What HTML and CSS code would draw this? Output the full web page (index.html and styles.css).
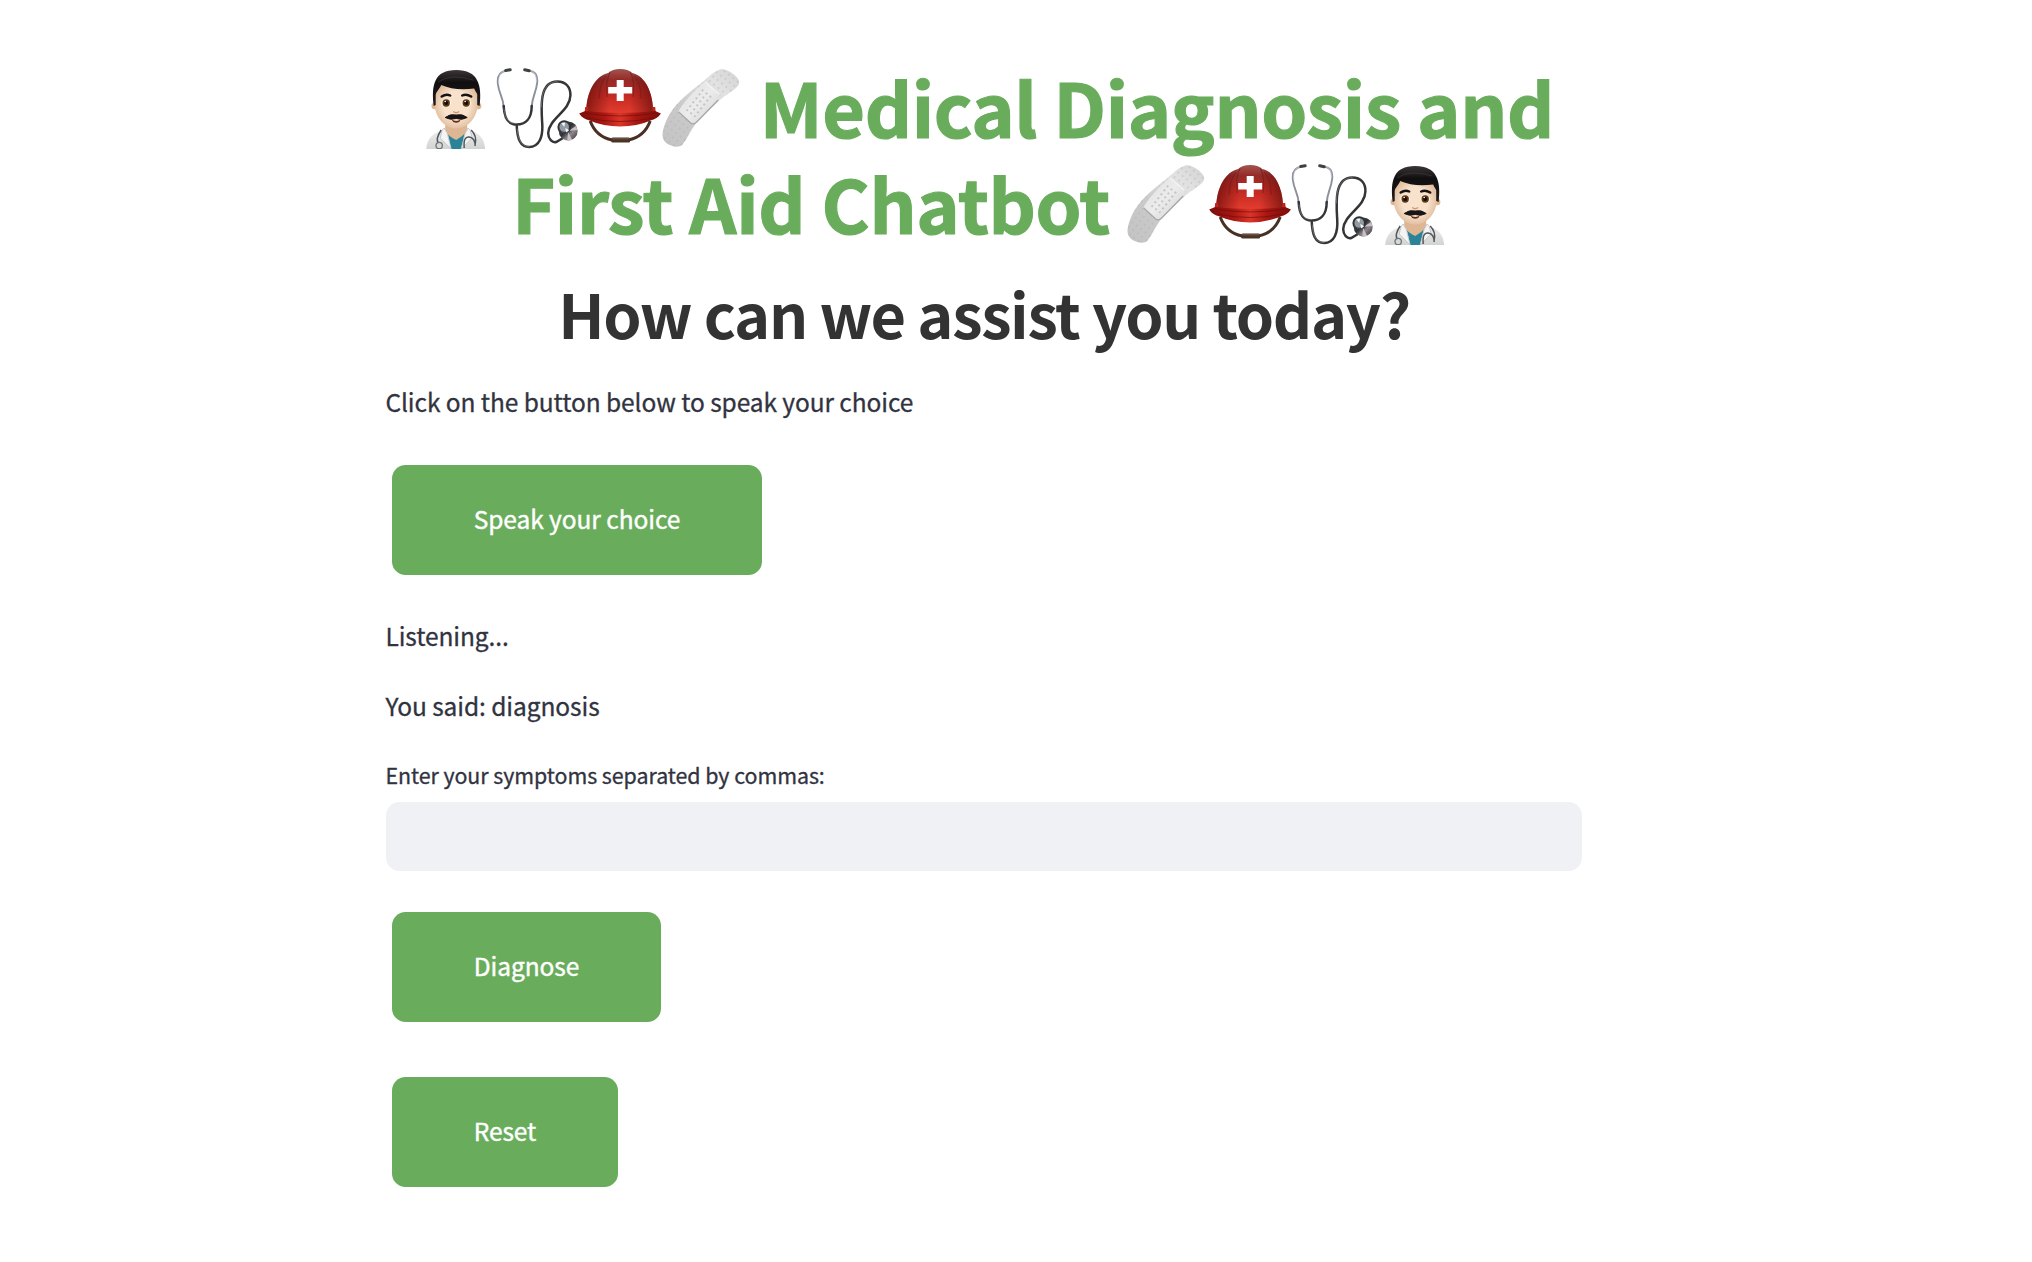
FILE: index.html
```html
<!DOCTYPE html>
<html lang="en">
<head>
<meta charset="utf-8">
<title>Medical Diagnosis and First Aid Chatbot</title>
<link rel="stylesheet" href="styles.css">
</head>
<body>
<svg class="defs" width="0" height="0" aria-hidden="true">
  <defs>
    <radialGradient id="skin" cx=".5" cy=".5" r=".6"><stop offset=".5" stop-color="#f8e2cb"/><stop offset="1" stop-color="#d9b08e"/></radialGradient>
    <linearGradient id="hair" x1="0" y1="0" x2="0" y2="1"><stop offset="0" stop-color="#3b3637"/><stop offset=".35" stop-color="#100e0f"/><stop offset="1" stop-color="#211c1d"/></linearGradient>
    <linearGradient id="coat" x1="0" y1="0" x2="0" y2="1"><stop offset="0" stop-color="#f0f0f0"/><stop offset="1" stop-color="#d2d4d4"/></linearGradient>
    <linearGradient id="dome" x1="0" y1="0" x2="0" y2="1"><stop offset="0" stop-color="#a35450"/><stop offset=".25" stop-color="#952a26"/><stop offset=".6" stop-color="#c22a22"/><stop offset="1" stop-color="#e43b2f"/></linearGradient>
    <linearGradient id="dome-side" x1="0" y1="0" x2="1" y2="0"><stop offset="0" stop-color="#5c0b08" stop-opacity=".65"/><stop offset=".35" stop-color="#5c0b08" stop-opacity="0"/><stop offset=".65" stop-color="#5c0b08" stop-opacity="0"/><stop offset="1" stop-color="#5c0b08" stop-opacity=".65"/></linearGradient>
    <linearGradient id="brim" x1="0" y1="0" x2="1" y2="0"><stop offset="0" stop-color="#7b0d0a"/><stop offset=".3" stop-color="#a91712"/><stop offset=".5" stop-color="#dc3529"/><stop offset=".7" stop-color="#a91712"/><stop offset="1" stop-color="#7b0d0a"/></linearGradient>
    <linearGradient id="strip" x1="1" y1="0" x2="0" y2="1"><stop offset="0" stop-color="#d2d2d2"/><stop offset=".25" stop-color="#e2e2e2"/><stop offset=".6" stop-color="#cacaca"/><stop offset="1" stop-color="#c3c3c3"/></linearGradient>
    <linearGradient id="pad" x1="0" y1="0" x2="1" y2="1"><stop offset="0" stop-color="#dedede"/><stop offset=".5" stop-color="#ececec"/><stop offset="1" stop-color="#cfcfcf"/></linearGradient>
    <linearGradient id="metal" x1="0" y1="0" x2="1" y2="1"><stop offset="0" stop-color="#55575a"/><stop offset=".45" stop-color="#303134"/><stop offset=".65" stop-color="#8d878d"/><stop offset="1" stop-color="#2c2c2e"/></linearGradient>
    <pattern id="holes" width="5.6" height="5.6" patternUnits="userSpaceOnUse" patternTransform="rotate(-52)"><circle cx="2" cy="2" r=".65" fill="#aaa"/></pattern>
    <pattern id="holes-dark" width="5" height="5" patternUnits="userSpaceOnUse" patternTransform="rotate(-52)"><circle cx="2" cy="2" r=".7" fill="#858585"/></pattern>
  </defs>
  <symbol id="doctor" viewBox="0 0 82 82">
    <path d="M12 82C13 71 18 67 29 63l5-3h16l5 3c11 4 15 8 16 19Z" fill="url(#coat)"/>
    <path d="M33 64 37 82H47L51 64Z" fill="#2a8498"/>
    <path d="M31 56h22v8q-5 6-11 9-7-3-11-9Z" fill="#dfb694"/>
    <path d="M30 61 33 66 37 82 26 71 28 63ZM54 61l-3 5-4 16 11-11-2-8Z" fill="#f4f4f4" stroke="#bbbfbf" stroke-width=".8"/>
    <path d="M27 63C23 69 22 73 24 76M57 63c5 5 5 10 4 14M50 81q-1-12 5-11 6 1 6 9" fill="none" stroke="#53575a" stroke-width="1.5"/>
    <circle cx="25" cy="78.5" r="3.2" fill="#d5d8d9" stroke="#6e7477" stroke-width="1.3"/>
    <circle cx="20.5" cy="39" r="3.2" fill="#dfb48f"/><circle cx="64" cy="39" r="3.2" fill="#dfb48f"/>
    <path d="M20.5 27Q22 15 42 15q20 0 21.5 12V38C63 50 54 61.5 42 61.5S21 50 20.5 38Z" fill="url(#skin)"/>
    <path d="M19.5 39C17 18 20 3 42 3s26 15 23.5 36l-2.500-1V27c-1-2-2-3-3-5.500-13 1.500-24 .5-33-3.500-2 5-5 6-5.500 10V38Z" fill="url(#hair)"/>
    <path d="M24 15Q36 6 59 13" fill="none" stroke="#454042" stroke-width="1" opacity=".6"/>
    <path d="M27.500 29.500Q32 26.500 36 28.500M48 28.500q4-2 9 1" fill="none" stroke="#171314" stroke-width="2.5" stroke-linecap="round"/>
    <ellipse cx="32" cy="36" rx="4.8" ry="3.6" fill="#fff"/><ellipse cx="52" cy="36" rx="4.8" ry="3.6" fill="#fff"/>
    <circle cx="32" cy="36" r="3.7" fill="#5b3710"/><circle cx="52" cy="36" r="3.7" fill="#5b3710"/>
    <circle cx="32" cy="36" r="1.9" fill="#140b05"/><circle cx="52" cy="36" r="1.9" fill="#140b05"/>
    <circle cx="31" cy="34.5" r=".8" fill="#fff"/><circle cx="51" cy="34.5" r=".8" fill="#fff"/>
    <path d="M39 44.500q3 2.500 6 0" fill="none" stroke="#cf9875" stroke-width="1.4"/>
    <path d="M37 52q5 4 10 0l-2 3q-3 1.500-6 0Z" fill="#6c2b20"/>
    <path d="M31 50.500q5-4 11-2.500 6-1.500 11 2.500-5 3-11 1-6 2-11-1Z" fill="#191415" stroke="#191415" stroke-width="1" stroke-linejoin="round"/>
  </symbol>
  <symbol id="stethoscope" viewBox="0 0 82 82">
    <g fill="none" stroke-linecap="round">
      <path d="M10 3.500C2 5 1 11 1.700 17 2.500 26 7 30 7.500 40M33 3.500c7 1 8.500 6 8 12-1 10-5 14-5.500 24.500" stroke="#8c909c" stroke-width="1.9"/>
      <path d="M10 3C3 5 2 11 2.700 17M33 3c6 1 7.500 6 7 12" stroke="#d6d9e2" stroke-width=".7"/>
      <path d="M9.500 3.500 14 2.800M28.500 2.800 33 3.700" stroke="#3f4042" stroke-width="3"/>
      <path d="M7.500 39C8 52 12 57.500 20.500 57.500S35.500 52 35.500 39M20.500 58C21 72 24 80 33 80 43 80 47 70 46 56 45 40 43 14.500 61 14.500c9 0 13.500 6 13.200 14C74 44 53 51 52 66c0 6 4 10 8 9l6-3.500" stroke="#343537" stroke-width="2.5"/>
      <path d="M7.800 42c1 11 5 14.500 12.700 14.500M21 62c1 13 5 17.500 12 17.500M45.300 40C45 28 48 15 61 14.500" stroke="#8b8b8e" stroke-width=".6"/>
    </g>
    <circle cx="72" cy="64" r="9.5" fill="url(#metal)"/>
    <path d="m72 64 8-5 1 4ZM72 65l4 8-5 .5Z" fill="#c9bfc8"/>
    <circle cx="68" cy="60" r="5.8" fill="#929aa3" stroke="#2f3135" stroke-width="2"/>
    <path d="m68 60-3-4 4-.5Zm1 1 4 2-3 3Z" fill="#f2f6f9"/><path d="M63 62q3 6 9 3" stroke="#4a4d51" fill="none"/>
  </symbol>
  <symbol id="helmet" viewBox="0 0 82 82">
    <path d="M11 54C15 65 23 71 33 73h16c10-2 18-8 22-19" fill="none" stroke="#4a3023" stroke-width="3"/>
    <rect x="32" y="70.5" width="19" height="5" rx="1.5" fill="#4a3426"/><path d="M33 71.800h17" stroke="#806551" stroke-width=".8"/>
    <path d="M7 46C7 25 16 9 29 6q4-4 12-4t12 4c13 3 21 19 21 40Z" fill="url(#dome)"/>
    <path d="M7 46C7 25 16 9 29 6q4-4 12-4t12 4c13 3 21 19 21 40Z" fill="url(#dome-side)"/>
    <path d="M28 30Q26 14 31 5M54 30q2-16-3-25M20 32q0-15 7-23M62 32q0-15-7-23" fill="none" stroke="#701b18" stroke-width="1.1" opacity=".6"/>
    <path d="M6 40h3v9H5zM73 40h3l1 9h-4z" fill="#bd241b"/>
    <path d="M0 46.500 6 44q35 4 70 0l5.700 2.500c-2 3-4 5-9 6.500Q58 59.500 41 59.500T9 53c-5-1.500-7-3.500-9-6.500Z" fill="url(#brim)"/>
    <path d="M6 46q35 6 70 0M8 51q33 7 66 0" fill="none" stroke="#6c0e0a" stroke-width="1" opacity=".65"/>
    <path d="M37.500 13h7v7H53v6.500h-8.500V34h-7v-7.500H29V20h8.500Z" fill="#fff"/>
  </symbol>
  <symbol id="bandage" viewBox="0 0 82 82">
    <path d="M42.500 14C49 8 54 4 59 2.500 65 1 79 10 78 16 77 22 66 26 55.700 35.700 49 42 40 50 34 57.300 29 64 26 72 21 78 17 81.500 9 79 5 76 1 72.500 .8 67.500 2 63 4 54 9 45 15.700 37.300 24 28 34 21 42.500 14Z" fill="url(#strip)"/>
    <path d="M42.500 14C49 8 54 4 59 2.500 65 1 79 10 78 16 77 22 66 26 55.700 35.700 49 42 40 50 34 57.300 29 64 26 72 21 78 17 81.500 9 79 5 76 1 72.500 .8 67.500 2 63 4 54 9 45 15.700 37.300 24 28 34 21 42.500 14Z" fill="url(#holes)"/>
    <path d="M44 14.500 58 27q2 2-1 5L36 55q-3 3-6 1L18.500 47q-2-2 0-5C26 31 34 23 44 14.500Z" fill="url(#pad)"/>
    <path d="M42 20 54 30 32 52 21 44Q30 30 42 20Z" fill="url(#holes-dark)"/>
    <path d="m17.500 45 12 11q3 2 6-1L57 33" fill="none" stroke="#a8a8a8" stroke-width="1.3"/>
    <path d="m44 15 14 12" stroke="#f4f4f4" stroke-width="1.2"/>
  </symbol>
</svg>
<main class="app">
  <h1 class="title"><svg class="emoji"><use href="#doctor"/></svg><svg class="emoji"><use href="#stethoscope"/></svg><svg class="emoji"><use href="#helmet"/></svg><svg class="emoji"><use href="#bandage"/></svg> Medical Diagnosis and<br>First Aid Chatbot <svg class="emoji"><use href="#bandage"/></svg><svg class="emoji"><use href="#helmet"/></svg><svg class="emoji"><use href="#stethoscope"/></svg><svg class="emoji"><use href="#doctor"/></svg></h1>
  <h2 class="subtitle">How can we assist you today?</h2>
  <p class="text">Click on the button below to speak your choice</p>
  <button class="btn btn-speak">Speak your choice</button>
  <p class="text">Listening...</p>
  <p class="text said">You said: diagnosis</p>
  <label class="label" for="symptoms">Enter your symptoms separated by commas:</label>
  <input class="field" id="symptoms" type="text">
  <button class="btn btn-diagnose">Diagnose</button>
  <button class="btn btn-reset">Reset</button>
</main>
</body>
</html>
```
FILE: styles.css
```css
* {
  box-sizing: border-box;
}

body {
  margin: 0;
  background: #fff;
  color: #31333f;
  font-family: "Noto Sans CJK SC", "Noto Sans", sans-serif;
}

.defs {
  position: absolute;
}

.app {
  display: flex;
  flex-direction: column;
  align-items: flex-start;
  width: 1196px;
  margin-left: 386px;
  padding-top: 58px;
}

.title {
  width: 100%;
  margin: 0;
  color: #69ad5c;
  font-size: 73.6px;
  font-weight: 700;
  letter-spacing: -.36px;
  line-height: 96px;
  text-align: center;
  white-space: nowrap;
  -webkit-text-stroke: 1.2px #69ad5c;
}

.emoji {
  width: 82.4px;
  height: 82px;
  vertical-align: -10.5px;
}

.subtitle {
  width: 100%;
  margin: 22px 0 26px;
  color: #333;
  font-size: 61.3px;
  font-weight: 600;
  letter-spacing: -1.36px;
  line-height: 82px;
  text-align: center;
  white-space: nowrap;
}

.text {
  margin: 0 0 0 -.6px;
  font-size: 24.5px;
  letter-spacing: -.075px;
  line-height: 44px;
  -webkit-text-stroke: .3px #31333f;
}

.said {
  margin-top: 26px;
  margin-bottom: 28px;
}

.btn {
  height: 110px;
  margin: 0 0 0 6px;
  padding: 0 0 4px;
  border: 0;
  border-radius: 13.6px;
  background: #69ad5c;
  color: #fff;
  font: 24.5px "Noto Sans CJK SC", "Noto Sans", sans-serif;
  letter-spacing: -.05px;
  -webkit-text-stroke: .4px #fff;
}

.btn-speak {
  width: 370px;
  margin-top: 41px;
  margin-bottom: 39px;
}

.btn-diagnose {
  width: 269px;
  margin-top: 41px;
  margin-bottom: 55px;
}

.btn-reset {
  width: 226px;
}

.label {
  margin-left: -.6px;
  font-size: 21.4px;
  letter-spacing: -.055px;
  line-height: 38px;
  -webkit-text-stroke: .3px #31333f;
}

.field {
  width: 100%;
  height: 69px;
  margin-top: 8px;
  padding: 0 20px;
  border: 0;
  border-radius: 13.6px;
  background: #f0f1f5;
  font: inherit;
}
```
